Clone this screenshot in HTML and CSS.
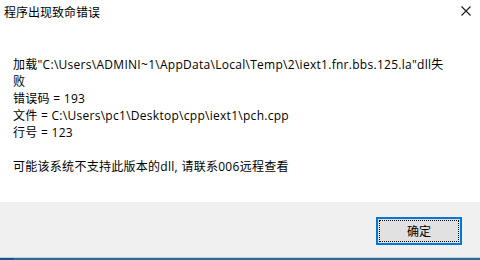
FILE: index.html
```html
<!DOCTYPE html>
<html lang="zh-CN">
<head>
<meta charset="utf-8">
<title>程序出现致命错误</title>
<link rel="stylesheet" href="styles.css">
</head>
<body>
<div class="window">
  <div class="titlebar">
    <span class="title">程序出现致命错误</span>
    <svg class="close" width="10" height="10" viewBox="0 0 10 10"><path d="M0.5 0.5 L9.5 9.5 M9.5 0.5 L0.5 9.5" stroke="#1a1a1a" stroke-width="1.1" fill="none"/></svg>
  </div>
  <div class="content">
    <p class="msg">加载"C:\Users\ADMINI~1\AppData\Local\Temp\2\iext1.fnr.bbs.125.la"dll失败</p>
    <p class="msg">错误码 = 193</p>
    <p class="msg">文件 = C:\Users\pc1\Desktop\cpp\iext1\pch.cpp</p>
    <p class="msg">行号 = 123</p>
    <p class="msg blank">&nbsp;</p>
    <p class="msg">可能该系统不支持此版本的dll, 请联系006远程查看</p>
  </div>
  <div class="footer">
    <button class="btn"><span class="focus">确定</span></button>
  </div>
  <div class="edge"></div>
</div>
</body>
</html>
```
FILE: styles.css
```css
html, body {
  margin: 0;
  padding: 0;
  background: #ffffff;
}
.window {
  width: 480px;
  height: 260px;
  display: flex;
  flex-direction: column;
  font-family: "Open Sans", "Noto Sans CJK SC", sans-serif;
  font-size: 12px;
  color: #000;
  background: #fff;
}
.titlebar {
  height: 30px;
  display: flex;
  align-items: flex-start;
  justify-content: space-between;
  padding: 4px 9px 0 4px;
  box-sizing: border-box;
}
.title {
  line-height: 17px;
}
.close {
  margin-top: 2px;
}
.content {
  height: 172px;
  padding: 26px 0 0 13px;
  box-sizing: border-box;
}
.msg {
  margin: 0;
  line-height: 17px;
  width: 432px;
  word-break: break-all;
  letter-spacing: 0.28px;
}
.footer {
  flex: 1;
  background: #f0f0f0;
  display: flex;
  justify-content: flex-end;
  align-items: flex-start;
  padding: 15px 18px 0 0;
}
.btn {
  width: 86px;
  height: 28px;
  border: 2px solid #0078d7;
  background: #e1e1e1;
  padding: 1px;
  margin: 0;
  font: inherit;
  color: #000;
  display: flex;
}
.focus {
  flex: 1;
  border: 1px dotted #000;
  display: flex;
  align-items: center;
  justify-content: center;
  line-height: 17px;
}
.edge {
  height: 3px;
  border-top: 1px solid #b7d3e6;
  background: linear-gradient(to right, #1f4f86 0 14px, #2d6e8e 14px);
  box-sizing: border-box;
}
```
